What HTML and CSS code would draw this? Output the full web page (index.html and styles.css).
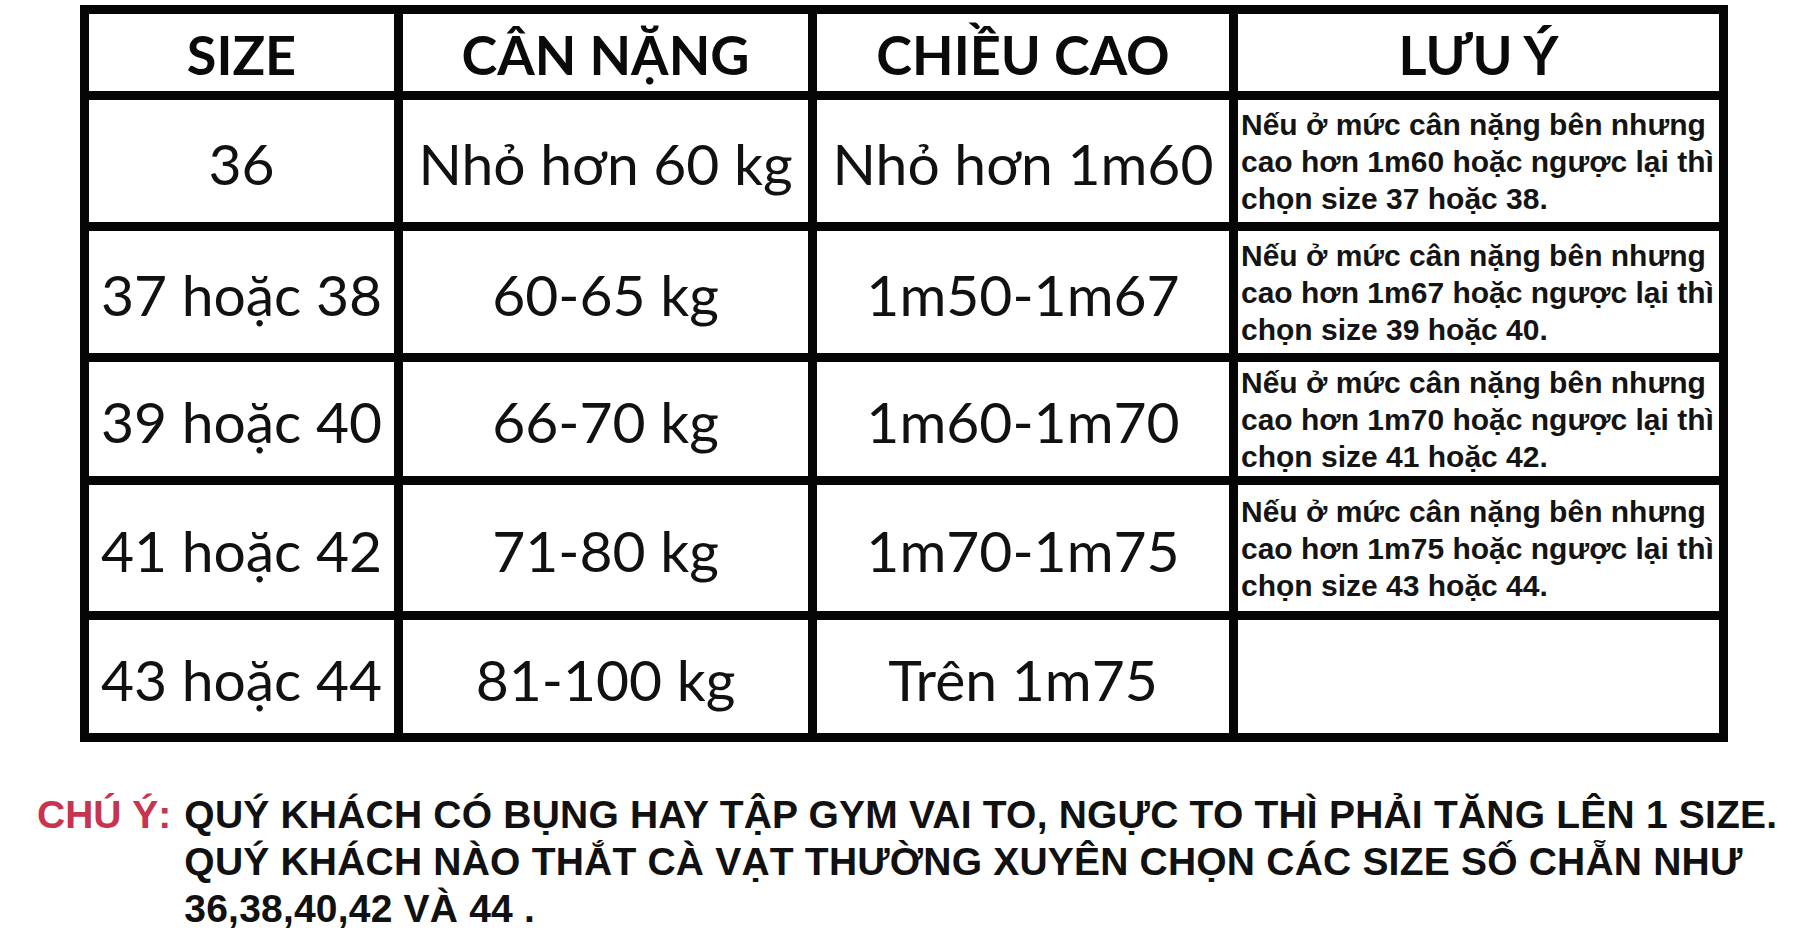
FILE: index.html
```html
<!DOCTYPE html>
<html lang="vi">
<head>
<meta charset="utf-8">
<title>Bảng size</title>
<link rel="stylesheet" href="styles.css">
</head>
<body>
<div class="page">
  <div class="size-table">
    <div class="cell head">SIZE</div>
    <div class="cell head">CÂN NẶNG</div>
    <div class="cell head">CHIỀU CAO</div>
    <div class="cell head">LƯU Ý</div>

    <div class="cell">36</div>
    <div class="cell">Nhỏ hơn 60 kg</div>
    <div class="cell">Nhỏ hơn 1m60</div>
    <div class="cell note">Nếu ở mức cân nặng bên nhưng<br>cao hơn 1m60 hoặc ngược lại thì<br>chọn size 37 hoặc 38.</div>

    <div class="cell">37 hoặc 38</div>
    <div class="cell">60-65 kg</div>
    <div class="cell">1m50-1m67</div>
    <div class="cell note">Nếu ở mức cân nặng bên nhưng<br>cao hơn 1m67 hoặc ngược lại thì<br>chọn size 39 hoặc 40.</div>

    <div class="cell">39 hoặc 40</div>
    <div class="cell">66-70 kg</div>
    <div class="cell">1m60-1m70</div>
    <div class="cell note">Nếu ở mức cân nặng bên nhưng<br>cao hơn 1m70 hoặc ngược lại thì<br>chọn size 41 hoặc 42.</div>

    <div class="cell">41 hoặc 42</div>
    <div class="cell">71-80 kg</div>
    <div class="cell">1m70-1m75</div>
    <div class="cell note">Nếu ở mức cân nặng bên nhưng<br>cao hơn 1m75 hoặc ngược lại thì<br>chọn size 43 hoặc 44.</div>

    <div class="cell">43 hoặc 44</div>
    <div class="cell">81-100 kg</div>
    <div class="cell">Trên 1m75</div>
    <div class="cell note"></div>
  </div>

  <div class="remark">
    <div class="remark-label">CHÚ Ý:</div>
    <div class="remark-text">
      <div class="line">QUÝ KHÁCH CÓ BỤNG HAY TẬP GYM VAI TO, NGỰC TO THÌ PHẢI TĂNG LÊN 1 SIZE.</div>
      <div class="line">QUÝ KHÁCH NÀO THẮT CÀ VẠT THƯỜNG XUYÊN CHỌN CÁC SIZE SỐ CHẴN NHƯ</div>
      <div class="line">36,38,40,42 VÀ 44 .</div>
    </div>
  </div>
</div>
</body>
</html>
```

FILE: styles.css
```css
html, body {
  margin: 0;
  padding: 0;
  background: #ffffff;
}

.page {
  width: 1800px;
  height: 945px;
  box-sizing: border-box;
  padding: 5px 0 0 0;
  overflow: hidden;
}

.size-table {
  margin-left: 80px;
  display: grid;
  grid-template-columns: 305px 405px 412px 481px;
  grid-template-rows: 77px 122px 122px 114px 126px 113px;
  gap: 9px;
  padding: 9px;
  width: max-content;
  background: #050505;
}

.cell {
  background: #ffffff;
  display: flex;
  align-items: center;
  justify-content: center;
  padding-top: 4px;
  box-sizing: border-box;
  font-family: Lato, "Open Sans", sans-serif;
  font-size: 57px;
  color: #111111;
  white-space: nowrap;
}

.head {
  font-weight: 700;
  font-size: 54px;
  padding-top: 3px;
  color: #0a0a0a;
}

.note {
  justify-content: flex-start;
  padding: 0 0 0 3px;
  font-family: "Liberation Sans", Arial, sans-serif;
  font-weight: 700;
  font-size: 30px;
  line-height: 37px;
  color: #141414;
}

.remark {
  margin-top: 49px;
  padding-left: 37px;
  display: flex;
  gap: 13px;
  font-family: "Liberation Sans", Arial, sans-serif;
  font-weight: 700;
  font-size: 39px;
  line-height: 47px;
  white-space: nowrap;
}

.remark-label {
  color: #c6344e;
}

.remark-text {
  color: #111111;
  letter-spacing: 0.2px;
}
```
